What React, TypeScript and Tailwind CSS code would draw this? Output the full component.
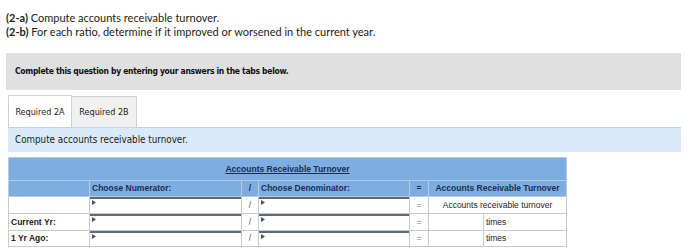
import React from "react";

const sans = "font-['Lato','Open_Sans',sans-serif]";
const verd = "font-['DejaVu_Sans_Condensed','DejaVu_Sans','Verdana',sans-serif]";
const arial = "font-['Liberation_Sans','Arial',sans-serif]";

function Marker() {
  return (
    <svg className="absolute left-[1px] top-[1px]" width="4" height="5" viewBox="0 0 4 5">
      <path d="M0 0 L4 2.5 L0 5 Z" fill="#4a5668" />
    </svg>
  );
}

function InputCell() {
  return (
    <td className="p-0 border border-[#c9c9c9] align-top">
      <div className="relative h-full w-full border-t-2 border-l border-r border-[#5d6a7d] bg-white">
        <Marker />
      </div>
    </td>
  );
}

const rows = [
  { label: "", answer: "Accounts receivable turnover", header: true },
  { label: "Current Yr:", answer: "times", header: false },
  { label: "1 Yr Ago:", answer: "times", header: false },
];

function RatioTable() {
  return (
    <table className={`ml-[8px] mt-[5px] border-collapse table-fixed w-[558px] ${arial} text-[8.5px] text-[#222]`}>
      <colgroup>
        <col className="w-[81px]" />
        <col className="w-[152px]" />
        <col className="w-[17px]" />
        <col className="w-[151px]" />
        <col className="w-[19px]" />
        <col className="w-[55px]" />
        <col className="w-[83px]" />
      </colgroup>
      <tbody>
        <tr className="h-[23px] bg-[#7eade2]">
          <td colSpan={7} className="border border-[#b9cbe0] text-center align-middle">
            <span className="font-bold underline text-[#1c2d55] pt-[1px] inline-block">Accounts Receivable Turnover</span>
          </td>
        </tr>
        <tr className="h-[16px] bg-[#7eade2] font-bold text-[#1c2d55]">
          <td className="border border-[#b9cbe0]" />
          <td className="border border-[#b9cbe0] pl-[2px]">Choose Numerator:</td>
          <td className="border border-[#b9cbe0] text-center">/</td>
          <td className="border border-[#b9cbe0] pl-[2px]">Choose Denominator:</td>
          <td className="border border-[#b9cbe0] text-center">=</td>
          <td colSpan={2} className="border border-[#b9cbe0] text-center">Accounts Receivable Turnover</td>
        </tr>
        {rows.map((r, i) => (
          <tr key={i} className={i === 2 ? "h-[16px]" : "h-[17px]"}>
            <td className="border border-[#c9c9c9] pl-[2px] font-bold">{r.label}</td>
            <InputCell />
            <td className="border border-[#c9c9c9] text-center text-[#555]">/</td>
            <InputCell />
            <td className="border border-[#c9c9c9] text-center text-[#777]">=</td>
            {r.header ? (
              <td colSpan={2} className="border border-[#c9c9c9] text-center">{r.answer}</td>
            ) : (
              <>
                <td className="border border-[#c9c9c9]" />
                <td className="border border-[#c9c9c9] pl-[2px]">{r.answer}</td>
              </>
            )}
          </tr>
        ))}
      </tbody>
    </table>
  );
}

export default function App() {
  return (
    <div className="w-[700px] h-[250px] bg-white overflow-hidden">
      <div className={`pt-[11px] pl-[6px] text-[11px] leading-[14px] text-[#222] ${sans}`}>
        <div><span className="font-bold">(2-a)</span> Compute accounts receivable turnover.</div>
        <div><span className="font-bold">(2-b)</span> For each ratio, determine if it improved or worsened in the current year.</div>
      </div>

      <div className={`ml-[6px] mt-[14px] w-[675px] h-[37px] bg-[#e0e0e0] flex items-center pl-[9px] ${verd} text-[8.5px] tracking-[-0.3px] font-bold text-[#111]`}>
        Complete this question by entering your answers in the tabs below.
      </div>

      <div className={`ml-[8px] mt-[5px] flex ${verd} text-[9px] text-[#222]`}>
        <div className="w-[64px] h-[32px] bg-white border border-b-0 border-[#d0d0d0] flex items-center justify-center pt-[3px]">
          Required 2A
        </div>
        <div className="w-[65px] h-[31px] mt-[1px] bg-[#f1f1f1] border border-l-0 border-b-0 border-[#d0d0d0] flex items-center justify-center pt-[2px]">
          Required 2B
        </div>
      </div>

      <div className={`ml-[8px] w-[673px] h-[25px] bg-[#dbeaf8] border-t border-[#c6d4e2] flex items-center pl-[7px] ${verd} text-[9.75px] text-[#222]`}>
        Compute accounts receivable turnover.
      </div>

      <RatioTable />
    </div>
  );
}
